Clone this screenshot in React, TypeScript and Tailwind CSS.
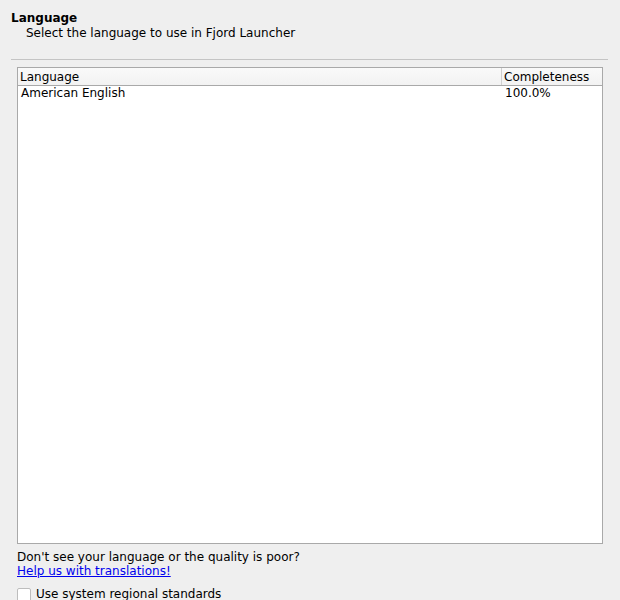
const App = () => {
  return (
    <div className="w-[620px] h-[600px] overflow-hidden bg-[#efefef] text-[12px] leading-[15px] text-black font-['DejaVu_Sans',sans-serif]">
      {/* Page header */}
      <div className="pl-[11px] pt-[11px]">
        <div className="font-bold">Language</div>
        <div className="pl-[15px]">Select the language to use in Fjord Launcher</div>
      </div>
      <div className="mx-[11px] mt-[18px] mr-[12px] h-px bg-[#c4c4c4]" />

      <div className="px-[17px] pt-[7px]">
        {/* Language table */}
        <div className="h-[477px] border border-[#a9a9a9] bg-white flex flex-col">
          <div className="flex h-[18px] pt-[2px] border-b border-[#a9a9a9] bg-gradient-to-b from-[#fafafa] to-[#f2f2f2]">
            <div className="w-[484px] px-[2px] border-r border-[#d0d0d0] -mt-[2px] pt-[2px]">Language</div>
            <div className="px-[2px]">Completeness</div>
          </div>
          <div className="flex h-[15px]">
            <div className="w-[485px] pl-[3px]">American English</div>
            <div className="pl-[2px]">100.0%</div>
          </div>
        </div>

        <div className="mt-[6px]">Don't see your language or the quality is poor?</div>
        <a href="#" className="block -mt-px text-[#0000ee] underline w-fit">Help us with translations!</a>

        <label className="flex items-center gap-[5px] mt-[8px]">
          <span className="w-[14px] h-[14px] border border-[#bdbdbd] rounded-[2px] bg-white" />
          <span>Use system regional standards</span>
        </label>
      </div>
    </div>
  );
};

export default App;
